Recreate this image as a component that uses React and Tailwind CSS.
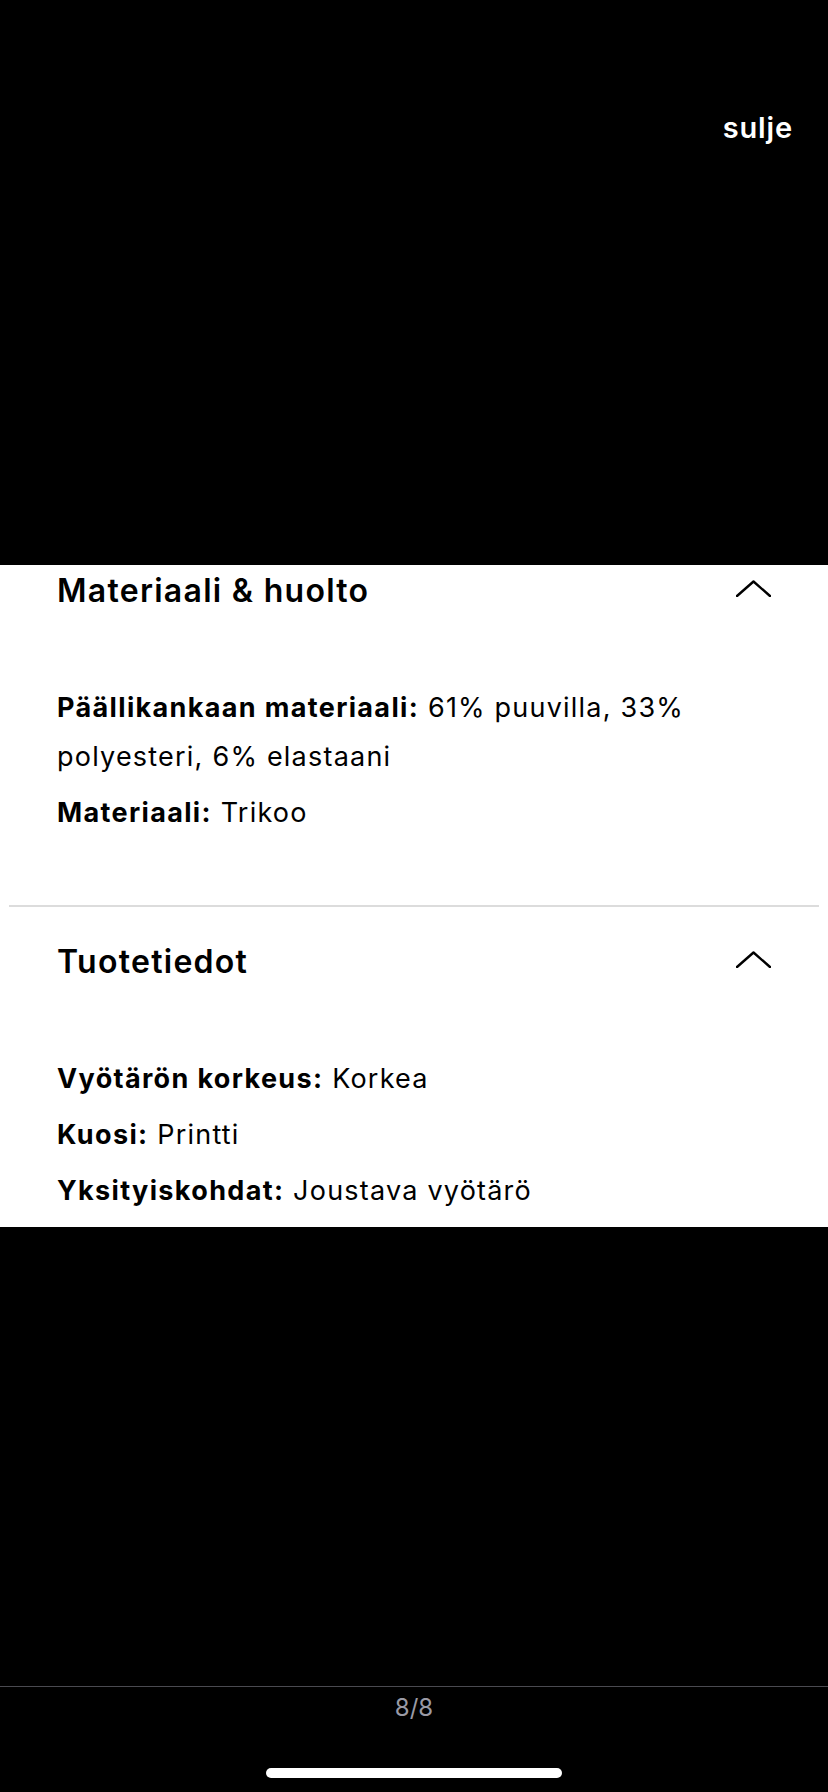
import { useState } from 'react'

const SECTIONS = [
  {
    title: 'Materiaali & huolto',
    rows: [
      { label: 'Päällikankaan materiaali:', value: '61% puuvilla, 33% polyesteri, 6% elastaani' },
      { label: 'Materiaali:', value: 'Trikoo' },
    ],
  },
  {
    title: 'Tuotetiedot',
    rows: [
      { label: 'Vyötärön korkeus:', value: 'Korkea' },
      { label: 'Kuosi:', value: 'Printti' },
      { label: 'Yksityiskohdat:', value: 'Joustava vyötärö' },
    ],
  },
]

function ChevronUp() {
  return (
    <svg width="35" height="17" viewBox="0 0 35 17" fill="none" className="mt-[-6px] shrink-0">
      <polyline points="1,16 17.5,1.5 34,16" stroke="#000" strokeWidth="2.4" strokeLinecap="round" strokeLinejoin="round" />
    </svg>
  )
}

function Section({ title, rows, first }) {
  return (
    <section className={first ? 'pt-[6px]' : 'pt-[35px]'}>
      <div className="flex items-center justify-between px-[57px]">
        <h2 className="text-[32px] leading-[40px] font-semibold tracking-[0.04em] text-black">{title}</h2>
        <ChevronUp />
      </div>
      <div className="mt-[72px] flex flex-col gap-[7px] px-[57px] text-[27px] leading-[49px] tracking-[0.045em] text-black">
        {rows.map((r) => (
          <p key={r.label}>
            <span className="font-bold tracking-[0.05em]">{r.label}</span> {r.value}
          </p>
        ))}
      </div>
    </section>
  )
}

export default function App() {
  const [page] = useState('8/8')

  return (
    <div className="flex h-[1792px] w-[828px] flex-col bg-black font-['Inter',sans-serif]">
      <div className="flex h-[565px] shrink-0 justify-end pr-[35px] pt-[111px]">
        <button className="h-fit text-[29px] leading-[34px] font-semibold tracking-[0.03em] text-white">sulje</button>
      </div>

      <div className="flex h-[662px] shrink-0 flex-col bg-white">
        <Section {...SECTIONS[0]} first />
        <div className="mx-[9px] mt-[68px] h-[2px] bg-[#dcdcdc]" />
        <Section {...SECTIONS[1]} />
      </div>

      <div className="flex flex-1 flex-col">
        <div className="mt-[459px] h-px bg-[#4a4a50]" />
        <div className="mt-[6px] text-center text-[24px] leading-[30px] text-[#9a9aa5]">{page}</div>
        <div className="mt-[45px] flex justify-center">
          <div className="h-[10px] w-[296px] rounded-full bg-white" />
        </div>
      </div>
    </div>
  )
}
